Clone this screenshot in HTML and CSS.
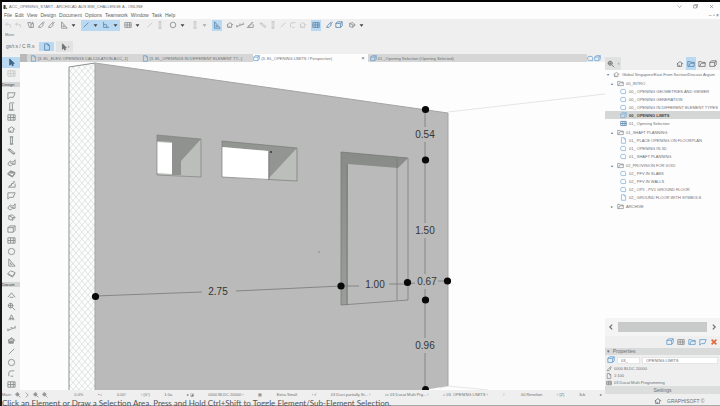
FILE: index.html
```html
<!DOCTYPE html>
<html lang="en">
<head>
<meta charset="utf-8">
<title>ACC_OPENING_START</title>
<link rel="stylesheet" href="styles.css">
</head>
<body>
<svg class="defs" aria-hidden="true">
  <symbol id="arrow" viewBox="0 0 10 10"><path d="M3 1v7l2-2 1 3 1-1-1-2h2z" fill="currentColor"/></symbol>
  <symbol id="undo" viewBox="0 0 10 10"><path d="M4 2 2 4l2 2M2 4h4q3 0 2 4"/></symbol>
  <symbol id="pick" viewBox="0 0 10 10"><path d="M2 8 3 6l3-3 2 2-3 3zM6 3l2-2 1 1-2 2"/></symbol>
  <symbol id="jar" viewBox="0 0 10 10"><path d="M1 2h4v6H3zM5 4l3-1v5H4M7 3V1"/></symbol>
  <symbol id="ruler" viewBox="0 0 10 10"><path d="M2 1v8h7zM4 5v2h2"/></symbol>
  <symbol id="slash" viewBox="0 0 10 10"><path d="m2 8 6-6"/></symbol>
  <symbol id="snap" viewBox="0 0 10 10"><path d="M2 1v7h7M2 4l4 1v3"/></symbol>
  <symbol id="grid" viewBox="0 0 10 10"><path d="M1 2h8v6H1zM1 5h8M4 2v6M7 2v6"/></symbol>
  <symbol id="circle" viewBox="0 0 10 10"><circle cx="5" cy="5" r="3.5"/></symbol>
  <symbol id="box" viewBox="0 0 10 10"><path d="M1 3h6v5H1zM1 3l2-2h6v5L7 8M7 3l2-2"/></symbol>
  <symbol id="wall" viewBox="0 0 10 10"><path d="M1 2h8l-2 5H3L1 9z"/></symbol>
  <symbol id="door" viewBox="0 0 10 10"><path d="M3 1h5M3 1v8h3V2M2 9h6"/></symbol>
  <symbol id="column" viewBox="0 0 10 10"><path d="M4 1h2v8H4zM3 1h4M3 9h4"/></symbol>
  <symbol id="beam" viewBox="0 0 10 10"><path d="m1 3 2-1 6 5-2 1zM3 2v2l5 4"/></symbol>
  <symbol id="slab" viewBox="0 0 10 10"><path d="m1 5 3-3 5 2-3 4zM1 5v1l5 3 3-4"/></symbol>
  <symbol id="roof" viewBox="0 0 10 10"><path d="m1 7 4-5 4 5M3 7h4"/></symbol>
  <symbol id="stair" viewBox="0 0 10 10"><path d="M1 8h2V6h2V4h2V2h2M3 8h6V4"/></symbol>
  <symbol id="morph" viewBox="0 0 10 10"><path d="m2 3 4-1 3 3-3 3-4-1zM2 3l4 2v3M6 5l3 0"/></symbol>
  <symbol id="mesh" viewBox="0 0 10 10"><path d="M1 7q2-5 4-3t4-2v5q-3-1-4 1T1 7m2-2 5 2"/></symbol>
  <symbol id="text" viewBox="0 0 10 10"><path d="m2 8 3-6 3 6M3 6h4M4 8V6m2 2V6"/></symbol>
  <symbol id="dim" viewBox="0 0 10 10"><path d="M1 7l8-3M1 5v3M9 2v3M4 4h2"/></symbol>
  <symbol id="arc" viewBox="0 0 10 10"><path d="M2 8V4q0-2 3-2h3M4 8h3"/></symbol>
  <symbol id="folder" viewBox="0 0 10 10"><path d="M1 8V2h3l1 1h4v5zM2 8l2-4h5"/></symbol>
  <symbol id="page" viewBox="0 0 10 10"><path d="M2 1h4l2 2v6H2zM6 1v2h2"/></symbol>
  <symbol id="view" viewBox="0 0 10 10"><path d="M2 2h5l1 2v4H2L1 6V4z"/></symbol>
  <symbol id="gear" viewBox="0 0 10 10"><circle cx="4" cy="4" r="2.5"/><path d="m6 6 3 3M4 1v6M1 4h6"/></symbol>
  <symbol id="home" viewBox="0 0 10 10"><path d="m1 5 4-3 4 3M2 4v4h5V4M4 8V6"/></symbol>
  <symbol id="cross" viewBox="0 0 10 10"><path d="m2 2 6 6M8 2 2 8"/></symbol>
  <symbol id="chevron" viewBox="0 0 10 10"><path d="m1 3 4 4 4-4"/></symbol>
  <symbol id="down" viewBox="0 0 10 10"><path d="m2 3 3 4 3-4z" fill="currentColor"/></symbol>
  <symbol id="right" viewBox="0 0 10 10"><path d="m3 1 4 4-4 4"/></symbol>
  <symbol id="left" viewBox="0 0 10 10"><path d="M7 1 3 5l4 4"/></symbol>
</svg>

<div class="app">
  <header class="top">
    <div class="title">
      <svg class="logo" viewBox="0 0 10 10"><path d="M1 1h4v8H1z" fill="#35432d"/><path d="m4 3 5 6H5z" fill="#817447"/></svg>
      <span>ACC_OPENING_START - ARCHICAD AUS BIM_CHALLENGE A - ONLINE</span>
      <span class="window-actions"><button aria-label="Minimize"><svg><use href="#chevron"/></svg></button><button aria-label="Restore"><svg><use href="#box"/></svg></button><button aria-label="Close"><svg><use href="#cross"/></svg></button></span>
    </div>
    <nav class="menu">
      <a href="#">File</a><a href="#">Edit</a><a href="#">View</a><a href="#">Design</a><a href="#">Document</a><a href="#">Options</a><a href="#">Teamwork</a><a href="#">Window</a><a href="#">Task</a><a href="#">Help</a>
      <span class="doc-actions">– ▫ ×</span>
    </nav>
    <div class="toolbar">
      <span class="group faint"><svg><use href="#undo"/></svg><svg><use href="#undo"/></svg></span>
      <span class="group"><svg><use href="#jar"/></svg><svg><use href="#pick"/></svg><svg><use href="#pick"/></svg></span>
      <span class="group wide"><svg><use href="#ruler"/></svg><svg class="caret"><use href="#down"/></svg></span>
      <span class="group wide on"><svg><use href="#slash"/></svg><svg class="caret"><use href="#down"/></svg><svg><use href="#snap"/></svg><svg class="caret"><use href="#down"/></svg></span>
      <span class="group wide"><svg><use href="#grid"/></svg><svg class="caret"><use href="#down"/></svg></span>
      <span class="group faint"><svg><use href="#slash"/></svg><svg><use href="#column"/></svg></span>
      <span class="group wide"><svg><use href="#circle"/></svg><svg class="caret"><use href="#down"/></svg></span>
      <span class="group wide faint"><svg><use href="#column"/></svg><svg class="caret"><use href="#down"/></svg></span>
      <span class="group on"><svg><use href="#ruler"/></svg></span>
      <span class="group"><svg><use href="#home"/></svg><svg><use href="#dim"/></svg><svg><use href="#stair"/></svg></span>
      <span class="group faint"><svg><use href="#beam"/></svg><svg><use href="#column"/></svg><svg><use href="#slash"/></svg><svg><use href="#arc"/></svg><svg><use href="#home"/></svg></span>
      <span class="group on"><svg><use href="#grid"/></svg></span>
      <span class="group blue"><svg><use href="#pick"/></svg><svg><use href="#box"/></svg></span>
      <span class="group wide"><svg><use href="#morph"/></svg><svg class="caret"><use href="#down"/></svg></span>
    </div>
    <div class="caption">Main:</div>
    <div class="info"><span>gs/r.s / C R.s</span><button class="mode on" aria-label="Selection method"><svg><use href="#page"/></svg></button><button class="mode" aria-label="Arrow options"><svg><use href="#arrow"/></svg><b>›</b></button></div>
  </header>

  <div class="main">
    <div class="left">
      <div class="work">
        <nav class="toolbox" aria-label="Toolbox">
          <button class="on" aria-label="Arrow"><svg><use href="#arrow"/></svg></button>
          <button class="faint" aria-label="Marquee"><svg><use href="#grid"/></svg></button>
          <h2>Design</h2>
          <button aria-label="Wall"><svg><use href="#wall"/></svg></button>
          <button aria-label="Door"><svg><use href="#door"/></svg></button>
          <button aria-label="Window"><svg><use href="#grid"/></svg></button>
          <button aria-label="Skylight"><svg><use href="#home"/></svg></button>
          <button aria-label="Column"><svg><use href="#column"/></svg></button>
          <button aria-label="Beam"><svg><use href="#beam"/></svg></button>
          <button aria-label="Slab"><svg><use href="#mesh"/></svg></button>
          <button class="solid" aria-label="Roof"><svg><use href="#slab"/></svg></button>
          <button aria-label="Stair"><svg><use href="#stair"/></svg></button>
          <button aria-label="Railing"><svg><use href="#wall"/></svg></button>
          <button aria-label="Shell"><svg><use href="#mesh"/></svg></button>
          <button aria-label="Morph"><svg><use href="#morph"/></svg></button>
          <button aria-label="Curtain wall"><svg><use href="#box"/></svg></button>
          <button aria-label="Zone"><svg><use href="#grid"/></svg></button>
          <button aria-label="Lamp"><svg><use href="#circle"/></svg></button>
          <button aria-label="Object"><svg><use href="#ruler"/></svg></button>
          <button aria-label="Mesh"><svg><use href="#slab"/></svg></button>
          <h2>Docum</h2>
          <button aria-label="Dimension"><svg><use href="#roof"/></svg></button>
          <button aria-label="Level"><svg><use href="#gear"/></svg></button>
          <button aria-label="Text"><svg><use href="#text"/></svg></button>
          <button aria-label="Label"><svg><use href="#dim"/></svg></button>
          <button class="solid" aria-label="Fill"><svg><use href="#home"/></svg></button>
          <button aria-label="Line"><svg><use href="#slash"/></svg></button>
          <button aria-label="Circle"><svg><use href="#circle"/></svg></button>
          <button aria-label="Polyline"><svg><use href="#arc"/></svg></button>
          <button aria-label="Drawing"><svg><use href="#grid"/></svg></button>
        </nav>
        <div class="viewport">
          <div class="tabs">
            <span class="tab-home"></span>
            <button class="tab"><svg><use href="#page"/></svg>[3. EL_ELEV. OPENINGS CALCULATION ACC_1]</button>
            <button class="tab"><svg><use href="#page"/></svg>[3. EL_OPENINGS IN DIFFERENT ELEMENT TY...]</button>
            <button class="tab active"><svg><use href="#box"/></svg><span>(3. EL_OPENING LIMITS / Perspective)</span><b>×</b></button>
            <button class="tab"><svg><use href="#box"/></svg>01 _Opening Selection (Opening Selected)</button>
            <span class="tab-end"><svg><use href="#view"/></svg><svg><use href="#box"/></svg></span>
          </div>
          <svg class="scene" viewBox="20 62 585 328" preserveAspectRatio="xMinYMin slice" role="img" aria-label="Wall with openings and dimensions">
            <defs>
              <pattern id="hatch" width="12" height="14" patternUnits="userSpaceOnUse" x="70" y="64"><path d="M0 0 6 7 12 0M0 14 6 7l6 7M0 7l6 7 6-7M0 7l6-7 6 7" fill="none" stroke="#c9cbcb" stroke-width=".5"/></pattern>
              <linearGradient id="reveal" x2="0" y2="1"><stop stop-color="#888b88"/><stop offset="1" stop-color="#9b9d9b"/></linearGradient>
            </defs>
            <path d="M20 62h585v328H20z" fill="#fdfdfe"/>
            <path d="M448 112 605 94M440 388l8-2 40 4" fill="none" stroke="#e4e5e6"/>
            <path d="M69 67 95 63V390H69z" fill="#fbfcfc"/>
            <path d="M69 67 95 63V390H69z" fill="url(#hatch)"/>
            <path d="M69 390V67L95 63" fill="none" stroke="#8d9090"/>
            <path d="M95 63 448 113V386l-24 4H95z" fill="#b9bab9"/>
            <path d="M95 63 448 113V386M95 63V390" fill="none" stroke="#a3a5a4"/>
            <path d="M157 135l44 4v38l-44-2z" fill="#bcbebc"/>
            <path d="M157 135l44 4-20 22v14h-9v-33l-15-1z" fill="#8f928f"/>
            <path d="M157 142l15 1v31l-15-1z" fill="#fff"/>
            <path d="M157 135l44 4v38l-44-2z" fill="none" stroke="#808380" stroke-width=".7"/>
            <path d="M222 141l75 7v33l-75-4z" fill="#bcbebc"/>
            <path d="M222 141l75 7-28 30v-27l-47-4z" fill="#929592"/>
            <path d="M222 147l46 4v29l-46-3z" fill="#fff"/>
            <path d="M222 141l75 7v33l-75-4zM269 151v29" fill="none" stroke="#777a77" stroke-width=".7"/><circle cx="271" cy="152" r="1" fill="#333"/>
            <path d="M341 152l67 6v142l-67 5z" fill="#b9bab9"/>
            <path d="M341 152l67 6-10 10-50-4v141l-7 0z" fill="url(#reveal)"/>
            <path d="M341 152l67 6v142l-67 5zM397 159v141M347 164v141" fill="none" stroke="#737673" stroke-width=".7"/>
            <circle cx="319" cy="252" r=".7" fill="#777"/>
            <path d="M95 296l107-4M236 291l105-5h18M389 284h18l8-1M438 281h9M425 109v18M425 142v81M425 238v36M425 289v49M425 353v37" fill="none" stroke="#777a78" stroke-width=".8"/>
            <g fill="#080808"><circle cx="95.500" cy="296.500" r="3.600"/><circle cx="341" cy="286" r="3.600"/><circle cx="407.500" cy="282.500" r="3.600"/><circle cx="447.500" cy="281" r="3.600"/><circle cx="425.500" cy="109.500" r="3.600"/><circle cx="425.500" cy="160" r="3.600"/><circle cx="425.500" cy="300" r="3.600"/><path d="M422 390q0-4 3.500-4t3.500 4z"/></g>
            <g class="dims"><text x="218" y="295">2.75</text><text x="375" y="288">1.00</text><text x="427" y="285">0.67</text><text x="425" y="138">0.54</text><text x="425" y="234">1.50</text><text x="425" y="349">0.96</text></g>
          </svg>
        </div>
      </div>
      <div class="quick">
        <span class="cell zoomers"><b>Main:</b><svg><use href="#gear"/></svg><svg><use href="#right"/></svg><svg><use href="#gear"/></svg><svg><use href="#gear"/></svg></span>
        <span class="cell">0.0%</span><span class="cell">• ⌕</span><span class="cell">0.00°</span><span class="cell">‹ (0°)</span><span class="cell">1:0a</span><span class="cell">▸ ◪</span><span class="cell">0000 BLDC 20000 ›</span><span class="cell">▦</span><span class="cell">Extra Small</span><span class="cell">› √</span><span class="cell">03 Duct‑partially St... ›</span><span class="cell">▭ 03 Ducat Multi Prg... ›</span><span class="cell">⌕ 03. OPENING LIMITS ›</span><span class="cell">♢</span><span class="cell">00 Renelion</span><span class="cell">‹ (Z)</span><span class="cell">3cb</span><span class="cell">▸</span>
      </div>
      <div class="status">Click an Element or Draw a Selection Area. Press and Hold Ctrl+Shift to Toggle Element/Sub-Element Selection.</div>
    </div>

    <aside class="navigator">
      <div class="nav-head"><button class="picker" aria-label="Project chooser"><svg><use href="#gear"/></svg><b>›</b></button><span class="maps"><button aria-label="Project map"><svg><use href="#home"/></svg></button><button class="on" aria-label="View map"><svg><use href="#folder"/></svg></button><button aria-label="Layout book"><svg><use href="#folder"/></svg></button><button aria-label="Publisher"><svg><use href="#box"/></svg></button></span></div>
      <div class="tree">
        <div class="row root"><b>▾</b><svg><use href="#home"/></svg>Global Singapore/East From Section/Discuss Argum</div>
        <div class="row folder"><b>▴</b><svg><use href="#folder"/></svg>00_INTRO</div>
        <div class="row"><svg><use href="#view"/></svg>00_ OPENING GEOMETRIES AND VIEWER</div>
        <div class="row"><svg><use href="#view"/></svg>00_ OPENING GENERATION</div>
        <div class="row"><svg><use href="#view"/></svg>00_ OPENING IN DIFFERENT ELEMENT TYPES</div>
        <div class="row selected"><svg><use href="#box"/></svg>00_ OPENING LIMITS</div>
        <div class="row schedule"><svg><use href="#grid"/></svg>01_ Opening Selection</div>
        <div class="row folder"><b>▴</b><svg><use href="#folder"/></svg>01_SHAFT PLANNING</div>
        <div class="row"><svg><use href="#page"/></svg>01_ PLACE OPENING ON FLOORPLAN</div>
        <div class="row"><svg><use href="#view"/></svg>01_ OPENING IN 3D</div>
        <div class="row"><svg><use href="#view"/></svg>01_ SHAFT PLANNING</div>
        <div class="row folder"><b>▴</b><svg><use href="#folder"/></svg>02_PROVISION FOR VOID</div>
        <div class="row"><svg><use href="#view"/></svg>02_ PFV IN SLABS</div>
        <div class="row"><svg><use href="#view"/></svg>02_ PFV IN WALLS</div>
        <div class="row"><svg><use href="#view"/></svg>02_ OP1 - PV1 GROUND FLOOR</div>
        <div class="row"><svg><use href="#page"/></svg>02_ GROUND FLOOR WITH SYMBOLS</div>
        <div class="row folder"><b>▸</b><svg><use href="#folder"/></svg>ARCHIVE</div>
      </div>
      <div class="scroll"><button aria-label="Scroll left"><svg><use href="#left"/></svg></button><span class="thumb"></span><button aria-label="Scroll right"><svg><use href="#right"/></svg></button></div>
      <div class="actions"><button aria-label="Clone"><svg><use href="#box"/></svg></button><button class="gray" aria-label="Save view"><svg><use href="#grid"/></svg></button><button aria-label="New folder"><svg><use href="#folder"/></svg></button><button aria-label="Publish"><svg><use href="#wall"/></svg></button><button class="delete" aria-label="Delete"><svg><use href="#cross"/></svg></button></div>
      <h3>▾ &nbsp;Properties</h3>
      <div class="fields"><svg><use href="#box"/></svg><input class="id" aria-label="ID" value="03_"><input aria-label="Name" value="OPENING LIMITS"></div>
      <div class="prop"><svg><use href="#pick"/></svg>0000 BLDC 20000</div>
      <div class="prop"><svg><use href="#page"/></svg>1:100</div>
      <div class="prop"><svg><use href="#grid"/></svg>03 Ducat Multi Programming</div>
      <button class="settings">Settings</button>
      <div class="brand"><svg><use href="#home"/></svg>GRAPHISOFT ©</div>
    </aside>
  </div>
</div>
</body>
</html>
```
FILE: styles.css
```css
* { box-sizing: border-box; }
body { margin: 0; background: #efefef; color: #6d6f71; font: 5px/7px "Liberation Sans", Arial, sans-serif; }
button { display: flex; align-items: center; justify-content: center; margin: 0; padding: 0; border: 0; background: none; color: inherit; font: inherit; }
a { color: inherit; text-decoration: none; }
b { font-weight: 400; }
h2, h3 { margin: 0; font: inherit; }
svg { flex: none; width: 8px; height: 8px; fill: none; stroke: currentColor; stroke-width: 1; }
.defs { position: absolute; width: 0; height: 0; }
.app { display: flex; flex-direction: column; height: 100vh; border-top: 2px solid #050505; border-left: 2px solid #161616; overflow: hidden; }

.top { flex: none; }
.title, .menu { display: flex; align-items: center; height: 8px; background: #fdfdfd; }
.title { height: 9px; gap: 1px; padding-left: 1px; font-size: 4px; }
.logo { width: 5px; height: 6px; stroke: none; }
.window-actions { display: flex; gap: 11px; margin-left: auto; padding-right: 6px; }
.window-actions svg { width: 5px; height: 5px; }
.menu { gap: 3px; padding-left: 2px; color: #5d5f61; font-size: 5px; }
.doc-actions { margin-left: auto; padding-right: 1px; }
.toolbar { display: flex; align-items: center; gap: 3px; height: 12px; padding-left: 1px; color: #85888a; }
.group { display: flex; align-items: center; gap: 2px; height: 11px; padding: 0 1px; }
.group.wide { gap: 3px; }
.faint { opacity: .4; }
.on { background: #b9d9f3; color: #5b82a3; }
.blue { color: #5584ae; }
.caret { width: 5px; height: 5px; margin-right: 1px; color: #44474a; }
.caption { height: 8px; padding-left: 3px; font-size: 4px; }
.info { display: flex; align-items: center; gap: 2px; height: 15px; padding: 2px 4px; font-size: 5px; }
.info span { width: 31px; }
.mode { width: 15px; height: 9px; }
.mode:last-child { width: 17px; height: 11px; background: #e2e3e3; }

.main { display: grid; flex: 1; grid-template-columns: minmax(0, 1fr) 115px; min-height: 0; }
.left { display: flex; flex-direction: column; min-width: 0; min-height: 0; }
.work { display: flex; flex: 1; min-height: 0; }
.toolbox { display: flex; flex: none; flex-direction: column; width: 18px; padding-top: 3px; background: #f0f1f1; color: #8b8e90; }
.toolbox > * { flex: 1; min-height: 0; }
.toolbox svg { width: 9px; height: 9px; }
.toolbox h2 { flex: none; height: 5px; margin: 3px 0; background: #d4d5d5; color: #444; font-size: 4px; line-height: 5px; }
.toolbox .on { color: #3f6486; }
.toolbox .solid svg { fill: #999; }
.viewport { display: flex; flex: 1; flex-direction: column; min-width: 0; min-height: 0; }
.tabs { display: flex; flex: none; height: 8px; background: #d5d6d5; }
.tab-home { width: 7px; margin-right: 3px; background: #b8b9b8; }
.tab { flex: 112 1 0; justify-content: flex-start; gap: 1px; min-width: 0; font-size: 4px; white-space: nowrap; }
.tab svg, .tab-end svg { width: 7px; height: 7px; color: #5e9bd1; }
.tab.active { background: #fdfdfd; padding-right: 3px; }
.tab.active b { margin-left: auto; font-size: 6px; }
.tab:nth-of-type(4) { flex-grow: 218; padding-left: 2px; }
.tab-end { display: flex; align-items: center; width: 18px; background: #efefef; }
.scene { display: block; flex: 1; width: 100%; min-height: 0; stroke: none; }
.dims { fill: #343635; font-family: "Liberation Sans", Arial, sans-serif; font-size: 10px; text-anchor: middle; }

.quick { display: flex; align-items: center; justify-content: space-between; height: 9px; padding: 0 3px 0 0; font-size: 4px; white-space: nowrap; }
.cell { display: flex; align-items: center; gap: 3px; }
.zoomers { padding-right: 12px; }
.zoomers svg { width: 6px; height: 6px; }
.status { height: 7px; border-bottom: 1px solid #a8a9a9; color: #505254; font: 8px/8px Lato, "Liberation Sans", sans-serif; white-space: nowrap; }

.navigator { display: flex; flex-direction: column; min-width: 0; padding-top: 3px; overflow: hidden; }
.nav-head { display: flex; justify-content: space-between; height: 13px; }
.picker { gap: 3px; width: 16px; background: #e0e1e1; }
.maps { display: flex; gap: 1px; padding-right: 2px; }
.maps button { width: 10px; }
.maps svg { width: 8px; height: 8px; }
.tree { flex: 1; min-height: 0; overflow: hidden; background: #fdfdfe; font-size: 4px; white-space: nowrap; }
.row { display: flex; align-items: center; gap: 2px; height: 8px; padding-left: 15px; }
.row svg { width: 7px; height: 7px; color: #79add6; }
.row b { width: 4px; }
.root { padding-left: 2px; }
.folder { margin-top: 1px; padding-left: 6px; }
.folder svg, .root svg { color: #888; }
.selected { background: #d5d6d6; color: #444; font-weight: 700; }
.schedule svg { color: #4d79a3; }
.scroll { display: flex; align-items: center; gap: 2px; height: 18px; padding: 0 1px; background: #f4f4f4; }
.scroll button { width: 10px; }
.scroll svg { width: 6px; height: 6px; stroke-width: 2; }
.thumb { flex: 1; height: 10px; background: #c9caca; }
.actions { display: flex; justify-content: flex-end; gap: 3px; height: 12px; padding-right: 2px; color: #5b9bd0; }
.actions svg { width: 8px; height: 8px; }
.actions .gray { color: #888; }
.actions .delete { color: #e2683d; }
.delete svg { stroke-width: 2; }
.navigator h3 { height: 7px; padding-left: 2px; background: #d9dada; }
.fields { display: flex; align-items: center; gap: 2px; height: 10px; padding: 0 2px; color: #5b9bd0; }
input { flex: 1; width: 0; min-width: 0; height: 7px; margin: 0; padding: 0 3px; border: 1px solid #e4e5e5; background: #fff; color: #666; font: 4px/5px "Liberation Sans", Arial, sans-serif; }
input.id { flex: none; width: 23px; }
.prop { display: flex; align-items: center; gap: 2px; height: 7px; padding-left: 1px; font-size: 4px; }
.prop svg { width: 6px; height: 6px; }
.settings { height: 8px; background: #dcdddd; }
.brand { display: flex; align-items: center; gap: 5px; height: 12px; padding: 3px 0 0 49px; border-bottom: 1px solid #a8a9a9; }
```
